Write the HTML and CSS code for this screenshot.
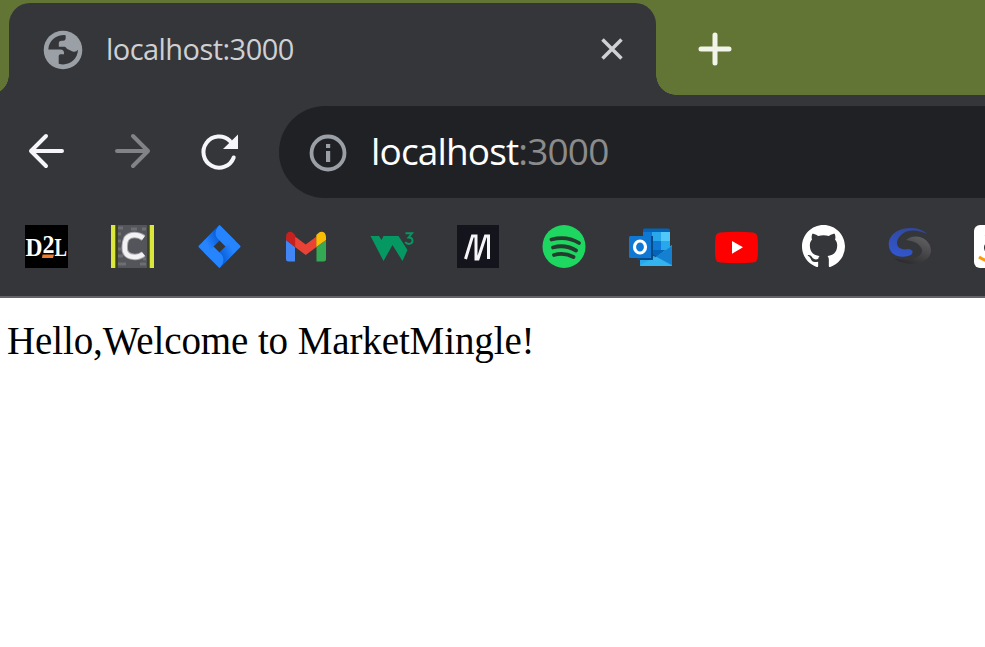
FILE: index.html
```html
<!DOCTYPE html>
<html lang="en">
<head>
<meta charset="utf-8">
<title>localhost:3000</title>
<link rel="stylesheet" href="styles.css">
</head>
<body>
<div class="browser">
  <div class="tabstrip">
    <div class="tab">
      <svg class="globe" width="40" height="40" viewBox="0 0 40 40"><circle cx="20" cy="20" r="19.3" fill="#9aa0a6"/><path d="M21.500 5C12.500 5 6 10.500 5.300 19.500H17.500Q21 19.500 21 23V24.200H17.500Q15.700 24.200 15.700 26V33.800C25.500 36.500 34.500 30 35 19.800Q32.500 22.800 29 21.200L24.300 19.100C23 18 23 17 21.700 16.700H15.800V13.500Q15.800 10.800 18.500 10.800H20Q22.500 10.800 22.700 8.500V5.500Z" fill="#35363a"/></svg>
      <span class="tab-title">localhost:3000</span>
      <svg class="close" width="24" height="24" viewBox="0 0 24 24"><path d="M2.500 2.500 21.500 21.500M21.500 2.500 2.500 21.500" stroke="#d0d1d4" stroke-width="3.500"/></svg>
    </div>
    <svg class="plus" width="34" height="34" viewBox="0 0 34 34"><path d="M17 3V31M3 17H31" stroke="#f1f4e9" stroke-width="5" stroke-linecap="round"/></svg>
  </div>
  <div class="toolbar">
    <svg class="nav" width="40" height="40" viewBox="0 0 40 40"><path d="M36 20H5M20 5 5 20 20 35" fill="none" stroke="#f5f5fa" stroke-width="4" stroke-linecap="round" stroke-linejoin="round"/></svg>
    <svg class="nav" width="40" height="40" viewBox="0 0 40 40"><path d="M4 20H35M20 5 35 20 20 35" fill="none" stroke="#828387" stroke-width="4" stroke-linecap="round" stroke-linejoin="round"/></svg>
    <svg class="nav" width="40" height="40" viewBox="0 0 40 40"><path d="M34.700 26.500A15.600 15.600 0 1 1 31 10" fill="none" stroke="#f5f5fa" stroke-width="4" stroke-linecap="round"/><path d="M39 3.500V18H24Z" fill="#f5f5fa"/></svg>
    <div class="omnibox">
      <svg class="info" width="38" height="38" viewBox="0 0 38 38"><circle cx="19" cy="19" r="16.500" fill="none" stroke="#9aa0a6" stroke-width="3.800"/><path d="M17 10h4.200v4H17zM17 17h4.200v11H17z" fill="#9aa0a6"/></svg>
      <span class="url"><span class="host">localhost</span>:3000</span>
    </div>
  </div>
  <div class="bookmarks">
    <svg viewBox="0 0 43 43"><path d="M0 0h43v43H0z" fill="#000"/><text class="d2l" x="0.500" y="30.500" textLength="17" lengthAdjust="spacingAndGlyphs">D</text><text class="d2l" x="17.500" y="28" textLength="12" lengthAdjust="spacingAndGlyphs">2</text><text class="d2l" x="29.500" y="30.500" textLength="12.500" lengthAdjust="spacingAndGlyphs">L</text><path d="M17.500 29.500H29L28 33H17Z" fill="#ef7d2d"/></svg>
    <svg viewBox="0 0 43 43"><path d="M0 0h43v43H0z" fill="#54555a"/><path d="M0 0h4.500v43H0zM38.500 0H43v43h-4.500z" fill="#dbe83b"/><path d="M4.500 0H7v43H4.500zM36 0h2.500v43H36z" fill="#3d4221"/><path d="M7 3h5M7 9h3M7 16h3M7 24h3M7 31h5M7 39h8M20 4h6M31 4h4M29 39h6M32 34h3" stroke="#6d6e73" stroke-width="3"/><path d="M32.500 13C27 9 19 9 15.500 13.500Q13 18 14 26C16 33 27 33.500 32.500 29" fill="none" stroke="#a6a6ab" stroke-width="6.500"/><path d="M32.500 13C27 9 19 9 15.500 13.500Q13 18 14 26C16 33 27 33.500 32.500 29" fill="none" stroke="#f2f2f4" stroke-width="4.500"/></svg>
    <svg viewBox="0 0 43 43"><defs><linearGradient id="ja" x1="1" y1="0.200" x2="0.300" y2="0.800"><stop stop-color="#0052cc"/><stop offset="1" stop-color="#2684ff"/></linearGradient><linearGradient id="jb" x1="0" y1="0.800" x2="0.700" y2="0.200"><stop stop-color="#0052cc"/><stop offset="1" stop-color="#2684ff"/></linearGradient></defs><path d="M21.500 0 42 20.500Q43 21.500 42 22.500L21.500 43 1 22.500Q0 21.500 1 20.500Z" fill="#2684ff"/><path d="M21.500 0V15.500L10.500 26.500 5 17Z" fill="url(#ja)"/><path d="M21.500 43V27.500L32.500 16.500 38 26Z" fill="url(#jb)"/><path d="M21.500 0C15.500 6 17 12 21.500 15.500L27 21 37 15.500Z" fill="#2684ff"/><path d="M21.500 43C27.500 37 26 31 21.500 27.500L16 22 6 27.500Z" fill="#2684ff"/><path d="M21.500 15.500 27.500 21.500 21.500 27.500 15.500 21.500Z" fill="#35363a"/></svg>
    <svg viewBox="0 0 43 43"><path d="M2 15 11 22V36.500H4.500Q2 36.500 2 34Z" fill="#4285f4"/><path d="M32.500 22 42 15V34Q42 36.500 39.500 36.500H32.500Z" fill="#34a853"/><path d="M11 11.500 21.700 19.500 32.500 11.500V22L21.700 30 11 22Z" fill="#ea4335"/><path d="M2 15V12C2 7 6.500 5.500 9 8L11.200 10V22Z" fill="#c5221f"/><path d="M42 15V12C42 7 37.500 5.500 34.500 8L32.300 10V22Z" fill="#fbbc04"/></svg>
    <svg viewBox="0 0 43 43"><path d="M.500 11H9L11.500 15 13.500 11H28.500L37.500 25 32.500 36 22.500 20 13.500 36Z" fill="#059862"/><path d="M35.500 8.300H42L38.500 12.500Q42.500 12.500 42.500 15.800C42.500 19.500 37 20 35.300 17" fill="none" stroke="#059862" stroke-width="1.900"/></svg>
    <svg viewBox="0 0 43 43"><path d="M1 0h42v43H1z" fill="#14141c"/><path d="M9.500 34 16.500 11H20V34H22L29.500 11H32.500V34" fill="none" stroke="#f6f6f9" stroke-width="3"/></svg>
    <svg class="spotify" viewBox="0 0 43 43"><circle cx="21" cy="21.500" r="21.500" fill="#1ed760"/><path d="M8.500 14.500C18 12 28 13 36 18M10 22.500Q22 19 33 25.500M11 30Q21 27 30.500 32" fill="none" stroke="#263b2e" stroke-linecap="round" stroke-width="3.800"/></svg>
    <svg viewBox="0 0 43 43"><path d="M14 5Q14 3.500 15.500 3.500H39Q41 3.500 41 5.500V23L28 32 14 24Z" fill="#0364b8"/><path d="M14 7h9v9h-9z" fill="#0f78d4"/><path d="M23 7h9v9h-9z" fill="#28a8ea"/><path d="M32 7h9v9h-9z" fill="#50c9fa"/><path d="M23 16h9v9h-9z" fill="#0f78d4"/><path d="M32 16h9v9h-9z" fill="#28a8ea"/><path d="M43 20V41H11V25L27 32Z" fill="#28a8ea"/><path d="m43 21-16 10.500L43 40Z" fill="#1480cf"/><path d="M11 40 27 32 43 41H13Z" fill="#34b4ef"/><path d="M22 11h2v24H8v-2h14z" fill="#064b86"/><rect y="11" width="22" height="22" rx="1.500" fill="#0f78d4"/><ellipse cx="11" cy="22" rx="5.500" ry="6" fill="none" stroke="#fff" stroke-width="3.200"/></svg>
    <svg viewBox="0 0 43 43"><path d="M5 7.500Q21.500 6 38 7.500 42 8 42.500 12 43.500 22 42.500 33 42 37 38 37.500 21.500 39 5 37.500 1 37 .500 33-.500 22 .500 12 1 8 5 7.500Z" fill="#f00"/><path d="M17 16 28 22.300 17 28.800Z" fill="#fff"/></svg>
    <svg viewBox="0 0 16 16"><path fill="#fff" d="M8 0C3.580 0 0 3.580 0 8c0 3.540 2.290 6.530 5.470 7.590.4.070.55-.17.55-.38 0-.19-.01-.82-.01-1.490-2.010.37-2.530-.49-2.690-.94-.09-.23-.48-.94-.82-1.130-.28-.15-.68-.52-.01-.53.63-.01 1.080.58 1.230.82.72 1.210 1.870.87 2.330.66.07-.52.28-.87.51-1.070-1.780-.2-3.640-.89-3.640-3.950 0-.87.31-1.590.82-2.150-.08-.2-.36-1.020.08-2.120 0 0 .67-.21 2.200.82A7.500 7.500 0 0 1 8 3.860c.68 0 1.360.09 2 .27 1.530-1.040 2.200-.82 2.200-.82.44 1.100.16 1.920.08 2.120.51.56.82 1.270.82 2.150 0 3.070-1.870 3.750-3.650 3.950.29.25.54.73.54 1.480 0 1.070-.01 1.930-.01 2.200 0 .21.15.46.55.38A8.010 8.010 0 0 0 16 8c0-4.420-3.580-8-8-8Z"/></svg>
    <svg viewBox="0 0 43 43"><defs><linearGradient id="sa" x1="0.700" y1="0" x2="0.300" y2="1"><stop stop-color="#31479b"/><stop offset="1" stop-color="#3157cf"/></linearGradient><linearGradient id="sb" x1="0.800" y1="0" x2="0.200" y2="1"><stop stop-color="#606063"/><stop offset="1" stop-color="#29292c"/></linearGradient></defs><path d="M18 15C28 7 43 14 43 26C42 36 29 41 17 38Q10 37 6 33C20 37 35 33 34 25C32 18 25 16 18 15Z" fill="url(#sb)"/><path d="M39 9C29-1 5 2 1 16C-1 28 9 34 20 31Q25 30 24.500 26Q22 23 17 24.500C8 24 7 17 12 11C18 4 29 4 39 9Z" fill="url(#sa)"/></svg>
    <svg viewBox="0 0 43 43"><rect width="43" height="43" rx="6" fill="#fff"/><path d="M18 19C13 18 11 21 12 24Q13 28 19 27M12 12Q14 10 18 10" fill="none" stroke="#35363a" stroke-width="3.500"/><path d="M5 32Q20 42 37 33" fill="none" stroke="#f90" stroke-width="3"/></svg>
  </div>
</div>
<main class="page">Hello,Welcome to MarketMingle!</main>
</body>
</html>
```

FILE: styles.css
```css
* { box-sizing: border-box; }
body {
  margin: 0;
  height: 647px;
  overflow: hidden;
  background: #fff;
}
svg { display: block; flex: none; overflow: visible; }
.browser {
  height: 298px;
  overflow: hidden;
  background: #35363a;
  border-bottom: 2px solid #656367;
  font-family: "Open Sans", "Noto Sans", sans-serif;
}
.tabstrip {
  display: flex;
  height: 95px;
  padding: 3px 0 0 9px;
  background: #637534;
}
.tab {
  position: relative;
  display: flex;
  align-items: center;
  width: 647px;
  height: 92px;
  padding: 0 32px 0 34px;
  border-radius: 21px 21px 0 0;
  background: #35363a;
}
.tab::before,
.tab::after {
  content: "";
  position: absolute;
  bottom: 0;
  width: 20px;
  height: 20px;
}
.tab::before {
  right: 100%;
  background: radial-gradient(circle at 0 0, transparent 19.5px, #35363a 20px);
}
.tab::after {
  left: 100%;
  background: radial-gradient(circle at 100% 0, transparent 19.5px, #35363a 20px);
}
.globe { margin-top: 2px; }
.tab-title {
  margin: 0 auto 0 23px;
  color: #cfd0d3;
  font-size: 29px;
  line-height: 40px;
  letter-spacing: -0.55px;
}
.plus { margin: 29px 0 0 42px; }
.toolbar {
  display: flex;
  align-items: center;
  height: 114px;
  padding: 0 0 0 26px;
}
.nav { margin: 0 46.5px 2px 0; }
.omnibox {
  display: flex;
  align-items: center;
  flex: 1;
  height: 92px;
  margin-left: -6.5px;
  padding-left: 30px;
  border-radius: 46px 0 0 46px;
  background: #202124;
}
.info { margin-top: 1px; }
.url {
  margin: 0 0 2px 24px;
  color: #8b8b8c;
  font-size: 37px;
  line-height: 50px;
  letter-spacing: -0.85px;
  white-space: nowrap;
}
.host { color: #fff; }
.bookmarks {
  display: flex;
  gap: 43.3px;
  padding: 16px 0 0 25px;
}
.bookmarks svg { width: 43px; height: 43px; }
.d2l {
  fill: #fff;
  font: bold 25px "Liberation Serif", serif;
}
.page {
  padding: 20px 7px;
  color: #000;
  font: 39px/45px "Liberation Serif", serif;
  letter-spacing: -0.11px;
}
```
